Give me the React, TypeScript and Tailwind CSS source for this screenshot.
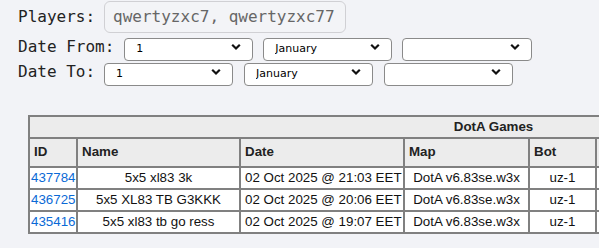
import React from 'react';

const games = [
  { id: '437784', name: '5x5 xl83 3k', date: '02 Oct 2025 @ 21:03 EET', map: 'DotA v6.83se.w3x', bot: 'uz-1', dur: '42:18', winner: 'Sentinel' },
  { id: '436725', name: '5x5 XL83 TB G3KKK', date: '02 Oct 2025 @ 20:06 EET', map: 'DotA v6.83se.w3x', bot: 'uz-1', dur: '51:07', winner: 'Scourge' },
  { id: '435416', name: '5x5 xl83 tb go ress', date: '02 Oct 2025 @ 19:07 EET', map: 'DotA v6.83se.w3x', bot: 'uz-1', dur: '38:44', winner: 'Sentinel' },
];

const Chevron = () => (
  <svg
    className="pointer-events-none absolute right-[4px] top-1/2 -translate-y-1/2"
    width="10"
    height="7"
    viewBox="0 0 10 7"
  >
    <path d="M1.2 1.2l3.8 3.8 3.8-3.8" fill="none" stroke="#111" strokeWidth="2.2" />
  </svg>
);

const Select = ({ value, width = 'w-[129px]' }: { value: string; width?: string }) => (
  <div className={`relative ${width} h-[23px]`}>
    <select
      defaultValue={value}
      className="w-full h-full appearance-none bg-white border border-[#8a8a8a] rounded-[4px] pl-[11px] pr-5 text-[11px] text-black"
      style={{ fontFamily: '"DejaVu Sans", sans-serif' }}
    >
      <option value={value}>{value}</option>
    </select>
    <span className="absolute right-[8px] top-1/2">
      <Chevron />
    </span>
  </div>
);

const App = () => {
  return (
    <div className="w-[599px] h-[248px] overflow-hidden bg-[#f2f3f7]">
      <div
        className="pl-[18px] pt-[1px] text-[16px] text-[#222]"
        style={{ fontFamily: '"DejaVu Sans Mono", "Liberation Mono", monospace' }}
      >
        <div className="flex items-center h-[32px]">
          <span className="mr-[9px]">Players:</span>
          <div className="w-[242px] h-[32px] flex items-center pl-[8px] border border-[#d0d0d4] rounded-[6px] bg-[#f3f4f7] text-[#666]">
            qwertyzxc7, qwertyzxc77
          </div>
        </div>
        <div className="flex items-center mt-[2px] h-[23px]">
          <span className="mr-[10px]">Date From:</span>
          <div className="flex gap-[10px]">
            <Select value="1" />
            <Select value="January" />
            <Select value="" width="w-[130px]" />
          </div>
        </div>
        <div className="flex items-center mt-[2px] h-[23px]">
          <span className="mr-[9px]">Date To:</span>
          <div className="flex gap-[11px]">
            <Select value="1" />
            <Select value="January" />
            <Select value="" />
          </div>
        </div>
      </div>

      <div className="pl-[28px] mt-[32px]">
        <table
          className="border-collapse table-fixed w-[929px] text-[13.33px] text-[#111]"
          style={{ fontFamily: '"Liberation Sans", Arial, sans-serif' }}
        >
          <colgroup>
            <col className="w-[48px]" />
            <col className="w-[163px]" />
            <col className="w-[164px]" />
            <col className="w-[125px]" />
            <col className="w-[67px]" />
            <col className="w-[120px]" />
            <col className="w-[120px]" />
            <col className="w-[122px]" />
          </colgroup>
          <thead>
            <tr className="bg-[#ececec]">
              <th colSpan={8} className="border-2 border-[#808080] h-[21px] text-center font-bold text-[#222]">
                DotA Games
              </th>
            </tr>
            <tr className="bg-[#ececec] text-[#222]">
              <th className="border-2 border-[#808080] h-[29px] text-left font-bold pl-[4px]">ID</th>
              <th className="border-2 border-[#808080] text-left font-bold pl-[4px]">Name</th>
              <th className="border-2 border-[#808080] text-left font-bold pl-[4px]">Date</th>
              <th className="border-2 border-[#808080] text-left font-bold pl-[4px]">Map</th>
              <th className="border-2 border-[#808080] text-left font-bold pl-[4px]">Bot</th>
              <th className="border-2 border-[#808080] text-left font-bold pl-[4px]"></th>
              <th className="border-2 border-[#808080] text-left font-bold pl-[4px]">Duration</th>
              <th className="border-2 border-[#808080] text-left font-bold pl-[4px]">Winner</th>
            </tr>
          </thead>
          <tbody>
            {games.map((g) => (
              <tr key={g.id} className="bg-white">
                <td className="border-2 border-[#808080] h-[21px] pl-[1px]">
                  <a href="#" className="text-[#0a6ad6]">{g.id}</a>
                </td>
                <td className="border-2 border-[#808080] text-center">{g.name}</td>
                <td className="border-2 border-[#808080] pl-[4px] whitespace-nowrap">{g.date}</td>
                <td className="border-2 border-[#808080] text-center whitespace-nowrap">{g.map}</td>
                <td className="border-2 border-[#808080] text-center">{g.bot}</td>
                <td className="border-2 border-[#808080] pl-[2px] text-[#e0a800]">★★★</td>
                <td className="border-2 border-[#808080] text-center">{g.dur}</td>
                <td className="border-2 border-[#808080] text-center">{g.winner}</td>
              </tr>
            ))}
          </tbody>
        </table>
      </div>
    </div>
  );
};

export default App;
